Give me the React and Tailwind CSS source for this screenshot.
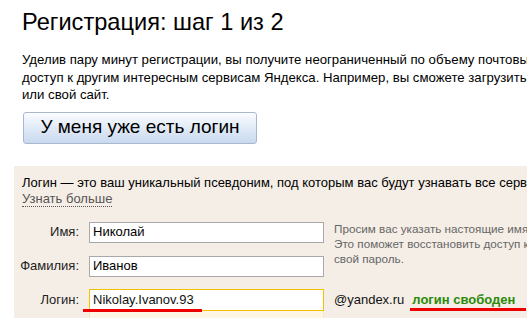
export default function App() {
  return (
    <div className="w-[527px] h-[318px] overflow-hidden bg-white font-['Liberation_Sans',Arial,sans-serif] text-black">
      {/* Header */}
      <div className="pl-[22px] pt-[6px]">
        <h1 className="text-[23.6px] leading-[32px] whitespace-nowrap">Регистрация: шаг 1 из 2</h1>
        <div className="mt-[13px] text-[13.2px] leading-[17.5px] whitespace-nowrap">
          <p>Уделив пару минут регистрации, вы получите неограниченный по объему почтовый ящик, а также</p>
          <p>доступ к другим интересным сервисам Яндекса. Например, вы сможете загрузить свои фотографии</p>
          <p>или свой сайт.</p>
        </div>
        <button className="mt-[8px] ml-[1px] w-[234px] h-[32px] rounded-[3px] border border-[#aab8cc] bg-gradient-to-b from-[#fafcff] to-[#c8d9ef] text-[19px] text-black">
          У меня уже есть логин
        </button>
      </div>

      {/* Form section */}
      <div className="ml-[14px] mt-[22px] bg-[#f5eee6] pt-[9px] pb-[20px]">
        <div className="pl-[8px] text-[13px] leading-[16px] whitespace-nowrap">
          <p>Логин — это ваш уникальный псевдоним, под которым вас будут узнавать все сервисы Яндекса.</p>
          <a className="text-[#555] border-b border-dotted border-[#555]">Узнать больше</a>
        </div>

        <div className="mt-[15px] grid grid-cols-[65px_235px_1fr] gap-x-[10px] text-[13px]">
          <div className="h-[21px] flex items-center justify-end text-[#222]">Имя:</div>
          <div className="h-[21px] border border-[#a9a9a9] bg-white flex items-center pl-[3px] text-[13px]">Николай</div>
          <div className="row-span-2 -mt-[1px] text-[11.7px] leading-[15px] text-[#666] whitespace-nowrap">
            <p>Просим вас указать настоящие имя и фамилию.</p>
            <p>Это поможет восстановить доступ к почте, если вы забудете</p>
            <p>свой пароль.</p>
          </div>

          <div className="mt-[13px] h-[21px] flex items-center justify-end text-[#222]">Фамилия:</div>
          <div className="mt-[13px] h-[21px] border border-[#a9a9a9] bg-white flex items-center pl-[3px] text-[13px]">Иванов</div>

          <div className="mt-[12px] h-[22px] flex items-center justify-end text-[#222]">Логин:</div>
          <div className="mt-[12px] relative">
            <div className="h-[22px] border border-[#f2c200] bg-white flex items-center pl-[3px] text-[13px] text-[#111]">Nikolay.Ivanov.93</div>
            <div className="h-[20px] border-x border-[#f7e6b8] bg-[#fdf6e4]"></div>
            <div className="absolute left-[-6px] top-[20px] w-[119px] h-[3px] bg-[#ee0000]"></div>
          </div>
          <div className="mt-[12px] h-[22px] flex items-center whitespace-nowrap">
            <span className="text-[13px] text-[#111]">@yandex.ru</span>
            <span className="relative ml-[8px] text-[13px] font-bold text-[#2a8a0a]">
              логин свободен
              <span className="absolute left-[-2px] top-[18px] w-[116px] h-[3px] bg-[#ee0000]"></span>
            </span>
          </div>
        </div>
      </div>
    </div>
  );
}
